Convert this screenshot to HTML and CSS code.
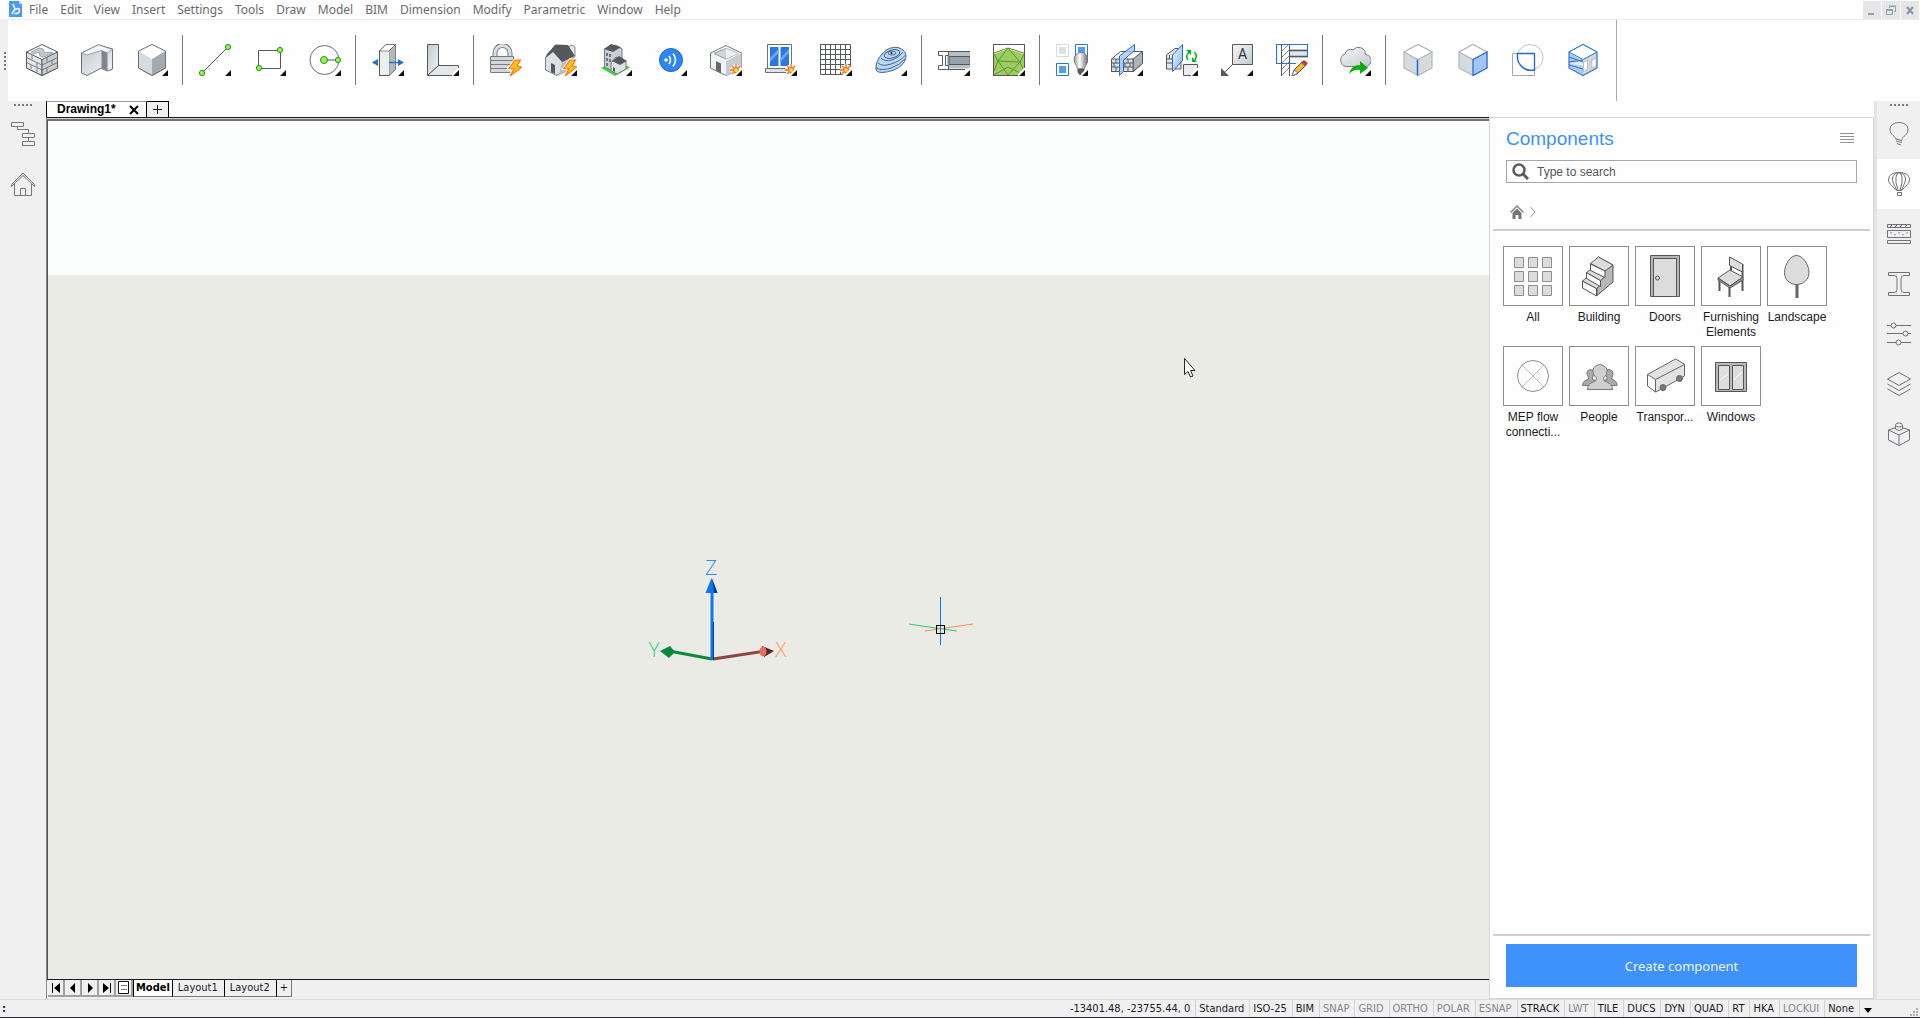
FILE: index.html
```html
<!DOCTYPE html>
<html lang="en">
<head>
<meta charset="utf-8">
<title>Drawing1</title>
<link rel="stylesheet" href="styles.css">
</head>
<body>
<svg class="defs" aria-hidden="true">
  <defs>
    <linearGradient id="steel" x1="0" y1="0" x2="1" y2="1"><stop offset="0" stop-color="#c3c8ce"/><stop offset="1" stop-color="#f4f5f7"/></linearGradient>
    <linearGradient id="shade" x1="0" y1="0" x2="1" y2="1"><stop offset="0" stop-color="#f6f7f8"/><stop offset="1" stop-color="#c4c8ce"/></linearGradient>
    <linearGradient id="sky" x1="0" y1="0" x2="1" y2="1"><stop offset="0" stop-color="#f4f9ff"/><stop offset="1" stop-color="#7fb0ec"/></linearGradient>
    <linearGradient id="metal" x1="0" y1="0" x2="1" y2="0"><stop offset="0" stop-color="#999"/><stop offset=".4" stop-color="#fff"/><stop offset="1" stop-color="#666"/></linearGradient>
    <symbol id="more" viewBox="0 0 32 32"><path d="M25 32V30L31 24H32V32Z" fill="#fff"/><path d="M26 32L32 26V32Z" fill="#111"/></symbol>
    <symbol id="spark" viewBox="0 0 32 32"><path d="M26 20v12M20 26h12M22 22l8 8M30 22l-8 8" stroke="#fff" stroke-width="3.5"/><path d="M26 20v12M20 26h12M22 22l8 8M30 22l-8 8" stroke="#f06a1a" stroke-width="1.3"/><circle cx="26" cy="26" r="2.6" fill="#ffd24a" stroke="#f06a1a"/></symbol>
    <symbol id="bolt" viewBox="0 0 32 32"><path d="M25 16l-6 8.5 5 .5-4 7 12-9-5-1 3.500-6z" fill="#ffb61e" stroke="#fff" stroke-width="3"/><path d="M25 16l-6 8.5 5 .5-4 7 12-9-5-1 3.500-6z" fill="#ffc020" stroke="#f07c12" stroke-width="1.200"/></symbol>
  </defs>
</svg>

<header class="menubar">
  <svg class="logo" width="14" height="16" viewBox="0 0 14 16"><path d="M0 0h10l3 3v13H0z" fill="#4c9af4"/><path d="M10 0l3 3h-3z" fill="#b7d7fb"/><path d="M4 3l2 5-3 5M5.500 12.500c3 .5 5-1 5-3.500 0-2-2.500-2-4 0" fill="none" stroke="#fff" stroke-width="1.500"/></svg>
  <nav class="menus">
    <button>File</button><button>Edit</button><button>View</button><button>Insert</button><button>Settings</button><button>Tools</button><button>Draw</button><button>Model</button><button>BIM</button><button>Dimension</button><button>Modify</button><button>Parametric</button><button>Window</button><button>Help</button>
  </nav>
  <div class="window-controls">
    <button aria-label="Minimize"><svg width="18" height="18"><path d="M5 12h6v2H5z" fill="#8ea0b4"/></svg></button>
    <button aria-label="Restore"><svg width="18" height="18" fill="none" stroke="#8ea0b4"><path d="M7.500 7V5.500h6v5H12M7 5h7"/><path d="M4.500 8.500h6v5h-6zM4 9.500h7"/></svg></button>
    <button aria-label="Close"><svg width="18" height="18"><path d="M6 6l6 7M12 6l-6 7" stroke="#8499b0" stroke-width="2.200"/></svg></button>
  </div>
</header>

<div class="toolbar">
  <i class="grip"></i>
  <div class="tools">
    <button aria-label="Wall"><svg class="ic" viewBox="0 0 32 32"><path d="M16 .5L31.500 8v16L16 31.500.5 24V8z" fill="#fff" stroke="#55595e"/><path d="M.5 8L16 15.500v16L.5 24z" fill="#e4e6e8" stroke="#55595e"/><path d="M31.500 8L16 15.500v16L31.500 24z" fill="#c9cdd1" stroke="#55595e"/><path d="M.5 13.500L16 21 31.500 13.500M.5 18.500L16 26 31.500 18.500" fill="none" stroke="#6d7278" stroke-width=".9"/><path d="M6 11v4.500M11 18.500V23M5 21v4M11 24v4M21 13v5M26 16v4.500M21 24v4" stroke="#6d7278" stroke-width=".9"/><path d="M5 8l8-4 4 1 2 4 5-1 3 1-9 4-4-1-1-4-5 2z" fill="#c4c9ce" stroke="#85898e" stroke-width=".7"/></svg></button>
    <button aria-label="Polysolid"><svg class="ic" viewBox="0 0 32 32"><path d="M.5 9L17.500.8 31.500 5v20l-5 2-6-2.500V24L6 31.500.5 29z" fill="url(#steel)" stroke="#6b7076"/><path d="M.5 9L6 11l14.500-4.500L26.500 9l5-3.500-14-4.700z" fill="#f3f4f6" stroke="#6b7076" stroke-width=".6"/><path d="M20.500 6.500L26.500 9v18l-6-3z" fill="#80868d"/></svg></button>
    <button aria-label="Solid"><svg class="ic" viewBox="0 0 32 32"><path d="M16 .5L29.500 7v17L16 31.500 2.500 24V7z" fill="#fff" stroke="#6b7076"/><path d="M2.500 7L16 15v16.500L2.500 24z" fill="#d7dade"/><path d="M29.500 7L16 15v16.500L29.500 24z" fill="#a5aab0"/><path d="M2.500 7v17L16 31.500 29.500 24V7" fill="none" stroke="#6b7076"/><use href="#more"/></svg></button>
    <i class="sep"></i>
    <button aria-label="Line"><svg class="ic" viewBox="0 0 32 32"><path d="M3 29L29 3" stroke="#55595e"/><g fill="#a6ec59" stroke="#12a012"><circle cx="3" cy="29" r="2.600"/><circle cx="29" cy="3" r="2.600"/></g><use href="#more"/></svg></button>
    <button aria-label="Rectangle"><svg class="ic" viewBox="0 0 32 32"><path d="M4.500 6.500h22v18h-22z" fill="none" stroke="#55595e"/><g fill="#a6ec59" stroke="#12a012"><circle cx="5" cy="24" r="2.600"/><circle cx="26" cy="6" r="2.600"/></g><use href="#more"/></svg></button>
    <button aria-label="Circle"><svg class="ic" viewBox="0 0 32 32"><circle cx="15.500" cy="16" r="14.500" fill="none" stroke="#6b7076"/><path d="M15 16h14" stroke="#55595e"/><g fill="#a6ec59" stroke="#12a012"><circle cx="15" cy="16" r="3.500"/><circle cx="29" cy="16" r="2.600"/></g><use href="#more"/></svg></button>
    <i class="sep"></i>
    <button aria-label="Push pull"><svg class="ic" viewBox="0 0 32 32"><path d="M7.500 7L14 .5h9.500v25L17 31.500H7.500z" fill="url(#shade)" stroke="#55595e"/><path d="M7.500 7H17l6.500-6.500v25L17 31.500V7" fill="#b3b8be" stroke="#777" stroke-width=".6"/><path d="M7.500 7H17v24.500H7.500z" fill="#eceef0"/><path d="M7.500 7H17L23.500.5H14z" fill="#fff" stroke="#55595e" stroke-width=".7"/><path d="M7.500 7v24.500H17" fill="none" stroke="#55595e"/><path d="M1 18.500h5M17 18.500h10" stroke="#2a6bc4" stroke-width="1.500"/><path d="M0 18.500l6-3.500v7zM32 18.500L26 15v7z" fill="#2a6bc4"/><use href="#more"/></svg></button>
    <button aria-label="L connect"><svg class="ic" viewBox="0 0 32 32"><path d="M.5.5h11v21l-11 10z" fill="url(#steel)" stroke="#55595e"/><path d="M11.500 21.500h20v4l-6 6H.5z" fill="#e4e6e9" stroke="#55595e"/><use href="#more"/></svg></button>
    <i class="sep"></i>
    <button aria-label="Lock BIM"><svg class="ic" viewBox="0 0 32 32"><path d="M5 12V9a7.500 7.500 0 0 1 15 0v3" fill="none" stroke="#777b80" stroke-width="5"/><path d="M5 12V9a7.500 7.500 0 0 1 15 0v3" fill="none" stroke="#dcdfe2" stroke-width="3"/><path d="M.5 12.500h23v16H.5z" fill="#d5d8da" stroke="#777b80"/><path d="M1 16.500h22M1 20.500h22M1 24.500h22" stroke="#7a7e83"/><use href="#bolt"/></svg></button>
    <button aria-label="Bimify"><svg class="ic" viewBox="0 0 32 32"><path d="M23 3l4-2 3 2v10" fill="#e6eaee" stroke="#85898e"/><path d="M.5 14L10 1l10 12v12l-8 6.500L.5 26z" fill="#dde1e5" stroke="#777b80"/><path d="M17 17l13-5v13l-16 6.500z" fill="#b8bec5"/><path d="M11 .5L23 1l7 11-13 6L8 8 .5 14 2 10z" fill="#55595e"/><path d="M6 19l4 2v9l-4-2z" fill="#55595e"/><use href="#bolt"/><use href="#more"/></svg></button>
    <button aria-label="Spatial locations"><svg class="ic" viewBox="0 0 32 32"><path d="M1 24l15-8 14 7.500L15 32z" fill="#35d63a"/><path d="M4.500 5L15 1l7 4v18l-9 4-8.500-4z" fill="#c9ced3" stroke="#777b80"/><path d="M4 5l7-5 10 3-8 5z" fill="#55595e"/><path d="M7 9v3M10 10v3M7 14v3M10 15v3M7 19v3" stroke="#55595e" stroke-width="1.500"/><path d="M11 19l5-6 10 4v8l-9 5-6-3z" fill="#dde1e5" stroke="#777b80"/><path d="M12 17l7-5 8 5-7 4z" fill="#55595e"/><path d="M13 23l2 1v4l-2-1z" fill="#55595e"/><use href="#more"/></svg></button>
    <button aria-label="Propagate"><svg class="ic" viewBox="0 0 32 32"><circle cx="16" cy="16" r="11.500" fill="#2f86ee" stroke="#1f68c4"/><circle cx="11" cy="16" r="1.800" fill="#fff"/><path d="M14 12q3 4 0 8M18 9.500q5 6.500 0 13" fill="none" stroke="#fff" stroke-width="1.600"/><use href="#more"/></svg></button>
    <button aria-label="Room"><svg class="ic" viewBox="0 0 32 32"><path d="M16 1.500L31.500 9v15L16 31.500.5 24V9z" fill="#f2f3f4" stroke="#777b80"/><path d="M16 4.500L28 9.500 16 15 4 9.500z" fill="#d2d5d9" stroke="#999"/><path d="M16 4.500L28 9.500 16 15z" fill="#eee"/><path d="M31.500 9L16 17v14.500L31.500 24z" fill="#c8ccd1"/><path d="M6 17l5 2.500v10L6 27z" fill="#66696d"/><use href="#spark"/><use href="#more"/></svg></button>
    <button aria-label="Window"><svg class="ic" viewBox="0 0 32 32"><path d="M2.500.5h24v24h-24z" fill="#fff" stroke="#6b7076"/><path d="M5 3h8.500v19H5zM15.500 3H24v19h-8.500z" fill="#2b78dc"/><path d="M5 14l8.500-9v4L5 18zM15.500 14L24 5v4l-8.500 9z" fill="#6aa6f0"/><path d="M.5 24.500h22v4H.5z" fill="#dfe2e5" stroke="#6b7076"/><use href="#spark"/><use href="#more"/></svg></button>
    <button aria-label="Grid"><svg class="ic" viewBox="0 0 32 32"><path d="M.5.5h30v30H.5zM5.500 0v31M10.500 0v31M15.500 0v31M20.500 0v31M25.500 0v31M0 5.500h31M0 10.500h31M0 15.500h31M0 20.500h31M0 25.500h31" fill="none" stroke="#55595e"/><use href="#spark"/><use href="#more"/></svg></button>
    <button aria-label="Terrain"><svg class="ic" viewBox="0 0 32 32"><path d="M1 26q-1-8 6-16Q14 2 23 3.500q9 3 8 10Q29 22 19 26 4 31 1 26z" fill="#bcd6f5" stroke="#46698f"/><g fill="none" stroke="#46698f"><path d="M3 19q4 4 13 1 10-3 14.500-9"/><path d="M1 24q6 3 15 0 9-3 14-9"/><path d="M6 14q3 4 11 2 8-3 11-8"/><ellipse cx="17" cy="10" rx="8" ry="4" transform="rotate(-16 17 10)"/><ellipse cx="17" cy="9" rx="4" ry="2"/></g><circle cx="16.500" cy="9" r="1"/><use href="#more"/></svg></button>
    <i class="sep"></i>
    <button aria-label="Profile"><svg class="ic" viewBox="0 0 32 32"><path d="M9 7.500h23v17H9z" fill="#b9bfc7"/><path d="M11 12.500h21v8H11z" fill="#9aa1ab" stroke="#55595e"/><path d="M.5 7.500H32M.5 25.500H27" stroke="#55595e"/><path d="M.5 7.500h10v4h-3v10h3v4H.5v-4h4v-10h-4z" fill="#fff" stroke="#55595e"/><use href="#more"/></svg></button>
    <button aria-label="Site"><svg class="ic" viewBox="0 0 32 32"><path d="M.5.5h31v31H.5z" fill="#fff" stroke="#55595e"/><path d="M1 10l14-5 16 5v21H1z" fill="#9dcb63"/><path d="M1 9l14-5 16 5M15 4L5 17l-4-7M15 4l12 14 4-8M5 17l22 1M5 17l10 14 12-13M1 27l4-10M31 27l-4-9M1 31l14-8 16 8" fill="none" stroke="#5f9628"/><path d="M.5.5h31v31H.5z" fill="none" stroke="#55595e"/><use href="#more"/></svg></button>
    <i class="sep"></i>
    <button aria-label="Isolate"><svg class="ic" viewBox="0 0 32 32"><path d="M.5.5h12v12H.5z" fill="#fff" stroke="#d9dcde"/><path d="M3 3h7v7H3z" fill="#dfe2e3"/><path d="M19.500.5h12v12h-12zM.5 19.500h12v12H.5z" fill="#fff" stroke="#2a75d6"/><path d="M22 3h7v7h-7zM3 22h7v7H3z" fill="#4f9df6"/><path d="M18 15.500a7 7 0 0 1 14 0c0 4-3 6-3.500 9h-7c-.5-3-3.500-5-3.500-9z" fill="url(#metal)" stroke="#666" stroke-width=".7"/><path d="M21.500 25h7v3l-2 3h-3l-2-3z" fill="#55595e"/><use href="#more"/></svg></button>
    <button aria-label="Section"><svg class="ic" viewBox="0 0 32 32"><path d="M.5 15l9-7.500h22v12L22 27.500H.5z" fill="#fff" stroke="#55595e"/><path d="M22 15l9.500-7.500v12L22 27.500z" fill="#aeb3b9" stroke="#55595e"/><path d="M.5 15H22v12.500H.5zM.5 19H22M.5 23H22M5 15v4M17 15v4M3 19v4M14 19v4M19 19v4M5 23v4M17 23v4" fill="#dadddf" stroke="#55595e"/><path d="M8.500 12L23.500.5v6L12.500 16v11.500l-4 4z" fill="#a8ccf6" fill-opacity=".85" stroke="#2a6bc4"/><use href="#more"/></svg></button>
    <button aria-label="Update section"><svg class="ic" viewBox="0 0 32 32"><path d="M.5 11L9 4.500h6V25H.5zM.5 15H6M.5 19H6M3.500 11v4" fill="#e2e4e6" stroke="#55595e"/><path d="M6.500 11L16.500.5v16l-10 11z" fill="url(#sky)" stroke="#2a6bc4"/><path d="M22 16q-3-4 1-8M28 8q4 3 1 8" fill="none" stroke="#0db313" stroke-width="1.500"/><path d="M20 6h5v5zM31 18h-5v-5z" fill="#0db313"/><path d="M17.500 20.500h14v11h-14z" fill="#ebecef" stroke="#55595e"/><use href="#more"/></svg></button>
    <button aria-label="Tag"><svg class="ic" viewBox="0 0 32 32"><path d="M11.500.5h20v20h-20z" fill="url(#shade)" stroke="#55595e"/><text x="21.500" y="15" text-anchor="middle" font-family="Roboto" font-size="14" fill="#333">A</text><path d="M12 20L3 29" stroke="#55595e"/><path d="M0 24v8h8z" fill="#55595e"/><use href="#more"/></svg></button>
    <button aria-label="Detail"><svg class="ic" viewBox="0 0 32 32"><path d="M13.500 5h18v9h-18z" fill="#dce5f0"/><path d="M14 6.500h18M14 12.500h18" stroke="#55595e" stroke-width="1.500"/><path d="M5.500 0v32M13.500 0v32" stroke="#55595e"/><path d="M6 7l7-7M6 13l7-7M6 19l7-7M6 25l7-7M6 31l7-7" stroke="#85898e"/><path d="M20 19.500H.5V.5h31v12" fill="none" stroke="#2a75d6" stroke-width="1.200"/><path d="M16 32l2-6 9-9 4 3-10 10z" fill="#ffb433" stroke="#55595e"/><path d="M25 19l3-3 4 3-3 3z" fill="#b5463c"/><path d="M16 32l2-6 4 3z" fill="#fff" stroke="#55595e" stroke-width=".7"/></svg></button>
    <i class="sep"></i>
    <button aria-label="Cloud upload"><svg class="ic" viewBox="0 0 32 32"><path d="M7 22.500a6.500 6.500 0 0 1-1-12.500 5.500 5.500 0 0 1 8-4 7 7 0 0 1 12.500 4.500A6 6 0 0 1 26 22.500z" fill="url(#shade)" stroke="#777b80"/><path d="M10 30q2-9 11-9v-4l8 7-8 6v-4q-6-1-11 4z" fill="#10ab12"/><use href="#more"/></svg></button>
    <i class="sep"></i>
    <button aria-label="Select edges"><svg class="ic" viewBox="0 0 32 32"><path d="M16 .5L30 8v16L16 31.500 2 24V8z" fill="#d5dadd" stroke="#b5b8bb" stroke-width="1.200"/><path d="M16 .5L30 8 16 15.500 2 8z" fill="#fff" stroke="#b5b8bb" stroke-width="1.200"/><path d="M15.500 15.500v16" stroke="#1f6ad0" stroke-width="1.500"/></svg></button>
    <button aria-label="Select faces"><svg class="ic" viewBox="0 0 32 32"><path d="M16 .5L30 8v16L16 31.500 2 24V8z" fill="#d5dadd" stroke="#b5b8bb" stroke-width="1.200"/><path d="M16 .5L30 8 16 15.500 2 8z" fill="#fff" stroke="#b5b8bb" stroke-width="1.200"/><path d="M30 8v16l-14 7.500v-16z" fill="#a3c5f2" stroke="#1f6ad0" stroke-width="1.200"/></svg></button>
    <button aria-label="Detect boundaries"><svg class="ic" viewBox="0 0 32 32" fill="none"><circle cx="18" cy="13.500" r="13" stroke="#c0c3c6"/><path d="M.5 9.500h22v22H.5z" stroke="#a4a7ab"/><path d="M5.500 9.500h17v16.500q-10 2-15.500-7-2-4-1.500-9.500z" stroke="#1f6ad0" stroke-width="1.300"/></svg></button>
    <button aria-label="Select solids"><svg class="ic" viewBox="0 0 32 32"><path d="M16 .5L30 8v16L16 31.500 2 24V8z" fill="#d2d6da" stroke="#2a75d6" stroke-width="1.200"/><path d="M16 .5L30 8 16 15.500 2 8z" fill="#fff" stroke="#2a75d6"/><path d="M3 9.500l13 6.500v14L3 23.500z" fill="#a9c9f3"/><path d="M3 19l13-2v5L3 20z" fill="#e6ebf0"/><path d="M2 13l14 5M2 18l14-2M2 21l14 4" stroke="#2a75d6"/><path d="M16.500 18l4-1.500V24l-4 4zM25 16l4-2v8l-4 2z" fill="#fff" stroke="#999" stroke-width=".5"/></svg></button>
  </div>
  <i class="toolbar-end"></i>
</div>

<main class="workspace">
  <aside class="dock dock-left">
    <i class="grip-h"></i>
    <button aria-label="Structure"><svg width="24" height="24" fill="none" stroke="#77797c"><path d="M.5.500h12v4H.5zM11.500 11.500h12v4h-12zM11.500 19.500h12v4h-12zM6.500 4.500v3h11v4M17.500 15.500v4"/></svg></button>
    <button aria-label="Home"><svg width="24" height="24" fill="none" stroke="#77797c"><path d="M.5 12.500L12 1l11.500 11.500v2L12 3.500.5 14.500zM3.500 12v11.500h17V12M9.500 23.500v-7h5v7"/></svg></button>
  </aside>

  <section class="center">
    <div class="doc-tabs">
      <button class="doc-tab">Drawing1*<svg width="10" height="10"><path d="M1 1l8 8M9 1L1 9" stroke="#000" stroke-width="2"/></svg></button>
      <button class="doc-add" aria-label="New drawing"><svg width="10" height="10"><path d="M4.500 0v9M0 4.500h9" stroke="#222"/></svg></button>
    </div>
    <div class="stage">
      <div class="drawing">
        <div class="canvas">
          <svg class="ucs" width="340" height="110" viewBox="640 555 340 110">
            <g font-family="Open Sans" font-weight="300" font-size="21" text-anchor="middle"><text x="711" y="575" fill="#2d8bff">Z</text><text x="654" y="657" fill="#3fd087">Y</text><text x="781" y="657" fill="#ff9a74">X</text></g>
            <path d="M669 651l43 8" stroke="#0b8a3c" stroke-width="3"/><path d="M660 651l10-5 5 6-6 6z" fill="#088a3a"/>
            <path d="M713 659l52-8" stroke="#8d4545" stroke-width="3"/><path d="M762 646l12 5-10 6z" fill="#5d2323"/><ellipse cx="763" cy="651.500" rx="3.500" ry="5" fill="#e2705e"/>
            <path d="M712 592v68" stroke="#0878f0" stroke-width="3"/><path d="M713.500 622v38" stroke="#0b3d86"/><path d="M711.500 578l6 15h-12z" fill="#0878f0"/><path d="M712 578l5.500 15H714z" fill="#0b3d86"/>
            <path d="M909 624l16 2.500 32 4.500" stroke="#23cf74" fill="none"/><path d="M925 631l48-7" stroke="#ff8a5c"/><path d="M940.500 597v48" stroke="#0878f0"/><rect x="936.500" y="625.500" width="8" height="8" fill="none" stroke="#000"/>
          </svg>
          <svg class="cursor" width="13" height="20"><path d="M.5.500v16l3.500-3 2.500 5.500 2.500-1-2.500-5.500H11z" fill="#fff" stroke="#222"/></svg>
        </div>
        <div class="layout-tabs">
          <button class="step" aria-label="First"><svg width="8" height="10"><path d="M0 0h1v10H0zM8 0v10L2 5z"/></svg></button>
          <button class="step" aria-label="Previous"><svg width="8" height="10"><path d="M6 0v10L1 5z"/></svg></button>
          <button class="step" aria-label="Next"><svg width="8" height="10"><path d="M2 0v10l5-5z"/></svg></button>
          <button class="step" aria-label="Last"><svg width="8" height="10"><path d="M7 0h1v10H7zM0 0v10l6-5z"/></svg></button>
          <button class="step" aria-label="List"><svg width="12" height="13"><path d="M.5.500h10v12H.5z" fill="#fff" stroke="#111"/><path d="M3 4.500h6M3 8.500h6" stroke="#777"/></svg></button>
          <button class="lt active">Model</button><button class="lt">Layout1</button><button class="lt">Layout2</button><button class="lt plus">+</button>
        </div>
      </div>

      <aside class="panel">
        <div class="panel-head"><h1>Components</h1><button aria-label="Menu"><svg width="14" height="12" stroke="#929292"><path d="M0 .5h14M0 3.500h14M0 6.500h14M0 9.500h14"/></svg></button></div>
        <label class="search"><svg width="17" height="17" fill="none" stroke="#5c5c5c"><circle cx="7" cy="7" r="5.500" stroke-width="2.500"/><path d="M11 11l5 5" stroke-width="3"/></svg><input type="text" aria-label="Search components" placeholder="Type to search"></label>
        <div class="crumbs"><a href="#" aria-label="Home"><svg width="14" height="14"><path d="M7 0l7 7-1 1-6-6-6 6-1-1z" fill="#808080"/><path d="M2.500 8L7 3.500 11.500 8v6H8.500v-4h-3v4h-3z" fill="#757575"/></svg></a><svg width="6" height="12" fill="none" stroke="#8c8c8c"><path d="M.5 1L5 6 .5 11"/></svg></div>
        <ul class="cards">
          <li><button><span><svg width="58" height="58" fill="#dcdcdc" stroke="#8e8e8e"><path d="M10.500 10.500h9v10h-9zM24.500 10.500h9v10h-9zM38.500 10.500h9v10h-9zM10.500 24.500h9v10h-9zM24.500 24.500h9v10h-9zM38.500 24.500h9v10h-9zM10.500 38.500h9v10h-9zM24.500 38.500h9v10h-9zM38.500 38.500h9v10h-9z"/></svg></span>All</button></li>
          <li><button><span><svg width="58" height="58" stroke="#555"><path d="M28 10l15 8v17L27 48.500V33z" fill="#b8b8b8"/><path d="M12.500 34l14 7.500v7.500l-14-8z" fill="#fff"/><path d="M12.500 34l4-3.500 14 8-4 3z" fill="#ddd"/><path d="M16.500 25.500l14 8v6l-14-8z" fill="#fff"/><path d="M16.500 25.500l4-3 14.500 7-4.500 4z" fill="#ddd"/><path d="M20.500 17l14.500 7v6.500l-14.500-7z" fill="#fff"/><path d="M20.500 16.500l8-6.500L43 18l-8 6z" fill="#ddd"/></svg></span>Building</button></li>
          <li><button><span><svg width="58" height="58" stroke="#555"><path d="M14.500 8.500h29v41h-29z" fill="#b5b5b5"/><path d="M17.500 11.500h23v38h-23z" fill="#dcdcdc"/><circle cx="21.500" cy="31" r="2" fill="#ddd"/></svg></span>Doors</button></li>
          <li><button><span><svg width="58" height="58" stroke="#555"><path d="M17.500 32v12M27.500 38v12M40.500 32v12" stroke-width="2"/><path d="M29 18v10M40.500 17v14" stroke-width="2"/><path d="M27.500 10l13 7v8l-13-6.500z" fill="#ddd"/><path d="M16 31l12-8 13 7-13 9z" fill="#ddd"/><path d="M16 31v2l12 8 13-8v-3l-13 9z" fill="#999"/></svg></span>Furnishing Elements</button></li>
          <li><button><span><svg width="58" height="58"><path d="M29 36v15" stroke="#666" stroke-width="3"/><path d="M28.500 8.500C22 8.500 16.500 18 16.500 25.500S22 37.500 28.500 37.500s12.500-4.500 12.500-12S35 8.500 28.500 8.500z" fill="#dcdcdc" stroke="#666"/></svg></span>Landscape</button></li>
          <li><button><span><svg width="58" height="58" fill="none"><path d="M18 18l22 22M40 18L18 40" stroke="#bbb"/><circle cx="29" cy="29" r="15.500" stroke="#8e8e8e"/></svg></span>MEP flow connecti...</button></li>
          <li><button><span><svg width="58" height="58" stroke="#777"><path d="M12.500 38.500q0-5 6-6v-2q-4-7 2-8 6 1 2 8v2q6 1 6 6zM31 38.500q0-5 6-6v-2q-4-7 2-8 6 1 3 8v2q5 1 5 6z" fill="#aaa"/><path d="M17.500 42.500q0-6 8-8.500l1-3q-5-4-3-10 6-7 13 0 2 6-3 10l1 3q8 2.500 8 8.500z" fill="#cfcfcf"/></svg></span>People</button></li>
          <li><button><span><svg width="58" height="58" stroke="#666"><path d="M11.500 27.500l28-15.500 9 5v12L20 45l-8.500-6z" fill="#e2e2e2"/><path d="M11.500 27.500l8 5V45l-8-6z" fill="#fff"/><path d="M19.500 32.500l29-15" fill="none"/><circle cx="27" cy="40.500" r="3" fill="#777"/><circle cx="43.500" cy="31.500" r="3" fill="#777"/></svg></span>Transpor...</button></li>
          <li><button><span><svg width="58" height="58" stroke="#555"><path d="M13.500 15.500h31v29h-31z" fill="#b9b9b9"/><path d="M16.500 18.500h11v24h-11zM30.500 18.500h11v24h-11z" fill="#dedede"/><path d="M18 33l8-6M32 33l8-8" stroke="#fff"/></svg></span>Windows</button></li>
        </ul>
        <div class="panel-foot"><button>Create component</button></div>
      </aside>
    </div>
  </section>

  <aside class="dock dock-right">
    <i class="grip-h"></i>
    <button aria-label="Tips"><svg width="24" height="24" fill="none" stroke="#707276"><path d="M9 17.500c0-3-6-4.500-6-10C3 3 7.500.5 12 .5S21 3 21 7.500c0 5.500-6 7-6 10M9 17l6 1.500M9 19l6 1.500M10 21.500l4 1.500"/></svg></button>
    <button class="current" aria-label="Components"><svg width="24" height="24" fill="none" stroke="#707276"><path d="M10 18.500Q1.500 12 1.500 8 1.500.5 12 .5T22.500 8Q22.500 12 14 18.500zM10 18.500Q5 10 5.500 6 7 1 12 .5 17 1 18.500 6 19 10 14 18.500M11 18Q8 10 9 5q1-4 3-4.500Q14 1 15 5q1 5-2 13M10.500 20.500h4v3h-4z"/></svg></button>
    <button aria-label="Compositions"><svg width="24" height="24" fill="none" stroke="#707276"><path d="M.5 2.500h23v3H.5zM.5 8.500h23v7H.5zM.5 18.500h23v3H.5z"/><path d="M3 5l3-3M8 5l3-3M13 5l3-3M18 5l3-3M4 10v1.500M8 12v1.500M12 10v1.500M16 12v1.500M20 10v1.500"/></svg></button>
    <button aria-label="Profiles"><svg width="24" height="24" fill="none" stroke="#707276"><path d="M1.500.5h21v3H17q-3 0-3 3v11q0 3 3 3h5.500v3h-21v-3H7q3 0 3-3v-11q0-3-3-3H1.500z"/></svg></button>
    <button aria-label="Properties"><svg width="24" height="24" fill="#f0f0f1" stroke="#707276"><path d="M0 3.500h24M0 11.500h24M0 20.500h24"/><circle cx="6.500" cy="3.500" r="2.500"/><circle cx="18.500" cy="11.500" r="2.500"/><circle cx="11.500" cy="20.500" r="2.500"/></svg></button>
    <button aria-label="Layers"><svg width="24" height="24" fill="none" stroke="#707276"><path d="M12 .5l11.500 6.500L12 13.500.5 7zM.5 12L12 18.500 23.500 12M.5 17L12 23.500 23.500 17"/></svg></button>
    <button aria-label="Blocks"><svg width="24" height="24" fill="none" stroke="#707276"><path d="M12 4.500L22.500 8v10L12 23.500 1.500 18V8zM1.500 8L12 13l10.500-5M12 13v10.500"/><path d="M8.500 3v4q3.500 3 7 0V3" fill="#f0f0f1"/><ellipse cx="12" cy="3" rx="3.500" ry="2" fill="#f0f0f1"/></svg></button>
  </aside>
</main>

<footer class="status">
  <span class="prompt">:</span>
  <div class="cells">
    <span>-13401.48, -23755.44, 0</span><button>Standard</button><button>ISO-25</button><button>BIM</button><button class="off">SNAP</button><button class="off">GRID</button><button class="off">ORTHO</button><button class="off">POLAR</button><button class="off">ESNAP</button><button>STRACK</button><button class="off">LWT</button><button>TILE</button><button>DUCS</button><button>DYN</button><button>QUAD</button><button>RT</button><button>HKA</button><button class="off">LOCKUI</button><button>None</button><button class="drop" aria-label="More"><svg width="8" height="5"><path d="M0 0h8L4 5z"/></svg></button>
  </div>
  <svg class="resize" width="10" height="10" fill="#b0b0b0"><path d="M7 0h2v2H7zM4 3h2v2H4zM7 3h2v2H7zM1 6h2v2H1zM4 6h2v2H4zM7 6h2v2H7z"/></svg>
</footer>
</body>
</html>
```

FILE: styles.css
```css
* { box-sizing: border-box; }
body {
  margin: 0;
  min-height: 100vh;
  display: flex;
  flex-direction: column;
  background: #fefefe;
  font: 12px/15px "Liberation Sans", Arial, sans-serif;
  color: #1a1a1e;
}
button {
  border: 0;
  padding: 0;
  background: none;
  font: inherit;
  color: inherit;
}
svg { display: block; flex: none; }
.defs { position: absolute; width: 0; height: 0; }

/* Menu bar */
.menubar {
  display: flex;
  height: 20px;
  padding-left: 9px;
  border-bottom: 1px solid #ececec;
}
.logo { margin-top: 1px; }
.menus {
  display: flex;
  flex: 1;
  gap: 12px;
  padding-left: 6px;
  font: 12px/19px "Noto Sans", sans-serif;
  color: #6a6a6e;
}
.window-controls { display: flex; gap: 1px; padding: 1px 1px 0 0; }
.window-controls button { background: #e6e6e7; }

/* Tool bar */
.toolbar { display: flex; height: 81px; }
.grip {
  width: 8px;
  background: #f0f0f1 repeating-linear-gradient(#777 0 2px, #f0f0f1 2px 4px) 4px 32px / 2px 18px no-repeat;
}
.tools { display: flex; padding: 15px 6px 0; }
.tools button { width: 55px; height: 50px; display: grid; place-items: center; }
.ic { width: 32px; height: 32px; }
.sep { width: 1px; height: 50px; margin: 0 4px 0 3px; background: #77797c; }
.toolbar-end { width: 1px; background: #a9abad; }

/* Side docks */
.workspace { display: flex; flex: 1; }
.dock {
  display: flex;
  flex-direction: column;
  background: #f0f0f1;
}
.dock-left { width: 46px; }
.dock-right { width: 46px; border-left: 3px solid #e4e4e6; }
.grip-h {
  height: 8px;
  background: repeating-linear-gradient(90deg, #77797c 0 2px, #f0f0f1 2px 4px) center 3px / 18px 2px no-repeat;
}
.dock button { height: 50px; display: grid; place-items: center; }
.dock .current { background: #fefefe; }

/* Document tabs */
.center { flex: 1; display: flex; flex-direction: column; min-width: 0; }
.doc-tabs { display: flex; height: 16px; }
.doc-tab {
  width: 101px;
  display: flex;
  align-items: center;
  justify-content: space-between;
  padding: 0 7px 0 10px;
  border: solid #000;
  border-width: 1px 1px 0;
  border-top-color: #999;
  background: #fff;
  font-weight: bold;
  color: #000;
}
.doc-add {
  width: 22px;
  display: grid;
  place-items: center;
  border: solid #000;
  border-width: 1px 1px 0 0;
  background: #f0f0f1;
}
.stage { flex: 1; display: flex; }
.drawing {
  flex: 1;
  display: flex;
  flex-direction: column;
  border-top: 1px solid #1d1d20;
  border-left: 1px solid #8a8a8d;
  background: #f0f0f1;
}
.canvas {
  position: relative;
  flex: 1;
  border-top: 2px solid #707075;
  border-left: 1px solid #505055;
  border-bottom: 1px solid #1d1d20;
  background: linear-gradient(#fcfefd 154px, #ebebe6 154px);
  box-shadow: 0 -1px #cfcfd2;
  margin-top: 1px;
}
.ucs { position: absolute; left: 592px; top: 434px; }
.cursor { position: absolute; left: 1136px; top: 237px; }

/* Layout tabs */
.layout-tabs {
  display: flex;
  height: 17px;
  margin-bottom: 2px;
  padding-left: 1px;
  font: 11px/16px "DejaVu Sans Condensed", "DejaVu Sans", sans-serif;
}
.step {
  width: 17px;
  display: grid;
  place-items: center;
  border: solid #a0a0a3;
  border-width: 0 2px 2px 0;
}
.lt { padding: 0 6px 0 5px; border: solid #77777a; border-width: 0 0 1px 1px; border-left-color: #000; }
.lt.active { padding: 0 2px; background: #fff; font-weight: bold; color: #000; }
.plus { padding: 0 3px; border-right-width: 1px; }

/* Components panel */
.panel {
  width: 385px;
  display: flex;
  flex-direction: column;
  border: 1px solid #d5d5d8;
  padding: 0 3px;
}
.panel-head {
  display: flex;
  align-items: center;
  justify-content: space-between;
  padding: 9px 16px 0 13px;
}
h1 { margin: 0; font-size: 19px; line-height: 24px; font-weight: normal; color: #3d91f7; }
.search {
  display: flex;
  align-items: center;
  gap: 8px;
  height: 23px;
  margin: 9px 13px 0;
  padding-left: 5px;
  border: 1px solid #a5a5a8;
}
.search input { flex: 1; border: 0; padding: 1px 0 0; outline: 0; background: none; font: inherit; }
.search input::placeholder { color: #55555a; opacity: 1; }
.crumbs {
  display: flex;
  align-items: center;
  gap: 6px;
  height: 48px;
  padding: 12px 17px 0;
  border-bottom: 2px solid #cdcdd0;
}
.cards {
  list-style: none;
  margin: 0;
  padding: 15px 10px 0;
  flex: 1;
  display: grid;
  grid-template-columns: repeat(auto-fill, 60px);
  grid-auto-rows: 100px;
  align-content: start;
  column-gap: 6px;
}
.cards button { width: 60px; display: flex; flex-direction: column; align-items: center; gap: 4px; }
.cards span { width: 60px; height: 60px; border: 1px solid #8c8c8f; }
.panel-foot { padding: 8px 13px 11px; border-top: 2px solid #cdcdd0; }
.panel-foot button {
  width: 100%;
  height: 43px;
  background: #3f92fb;
  color: #eef5ff;
  font: 13px/20px "Noto Sans", sans-serif;
}

/* Status bar */
.status {
  display: flex;
  height: 19px;
  border-top: 1px solid #dcdcde;
  border-bottom: 1px solid #2a2a2e;
  background: #f0f0f1;
  font: 11px/18px "DejaVu Sans Condensed", "DejaVu Sans", sans-serif;
}
.prompt { flex: 1; padding-left: 2px; font-weight: bold; }
.cells { display: flex; }
.cells > * { padding: 0 5px 0 3px; border-right: 1px solid #d2d2d5; }
.cells .off { color: #85858a; }
.cells .drop { border: 0; padding: 3px 0 0 4px; }
.resize { margin: 8px 1px 0 37px; }
```
